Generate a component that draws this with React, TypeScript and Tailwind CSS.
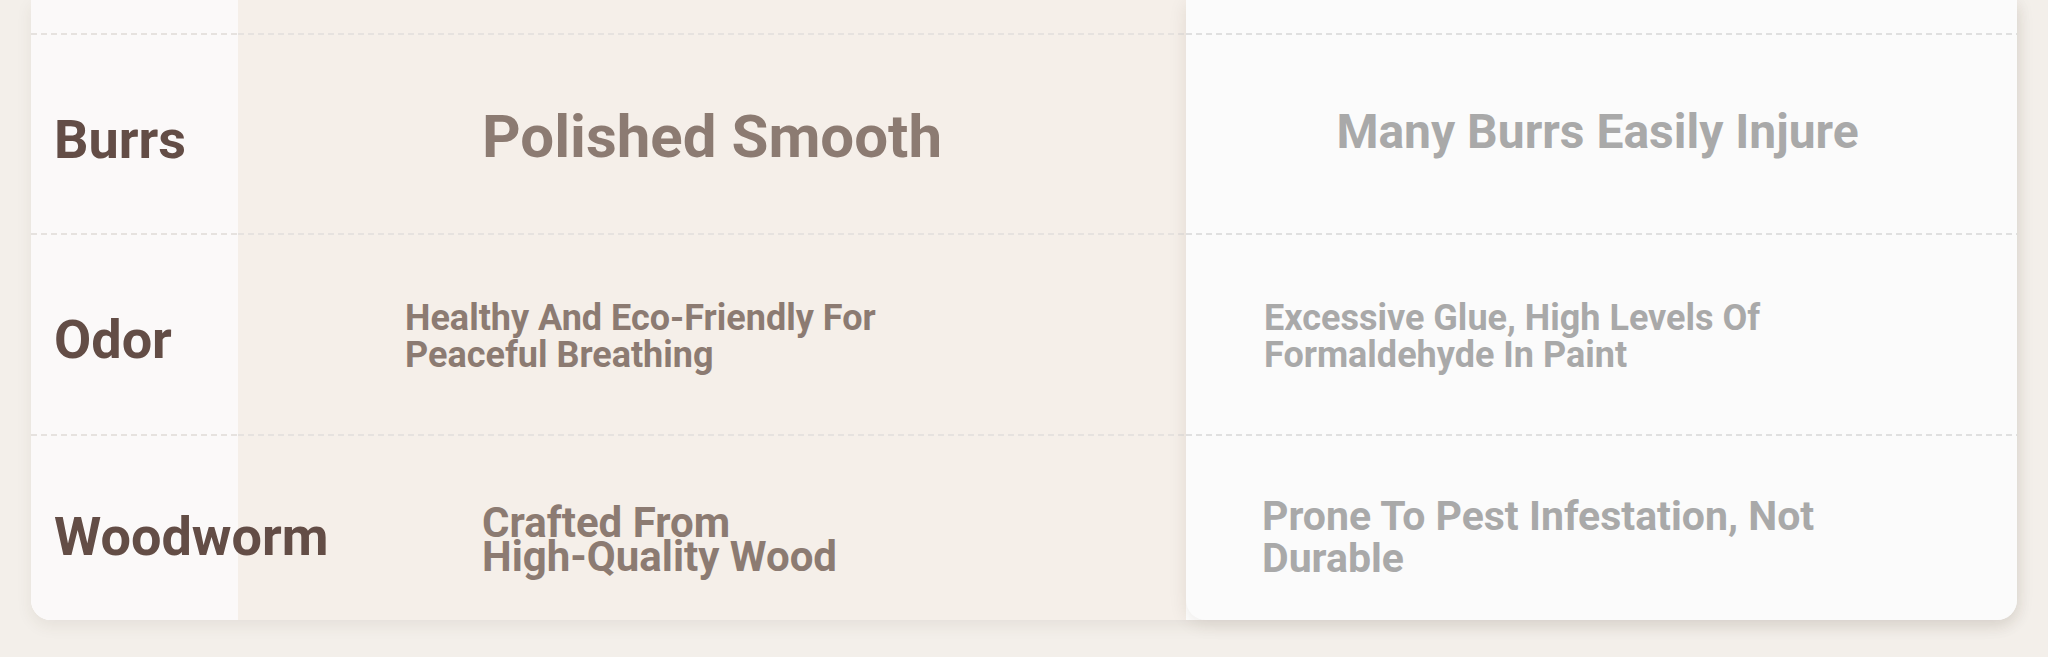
const rows = [
  {
    label: "Burrs",
    labelPad: "pt-[78px]",
    height: "h-[198px]",
    ours: (
      <p className="pt-[72px] text-center text-[60px] leading-none">
        Polished Smooth
      </p>
    ),
    theirs: (
      <p className="pt-[73px] pr-[8px] text-center text-[48px] leading-none">
        Many Burrs Easily Injure
      </p>
    ),
  },
  {
    label: "Odor",
    labelPad: "pt-[78px]",
    height: "h-[199px]",
    ours: (
      <p className="pt-[65px] pl-[167px] text-[36px] leading-[37px]">
        Healthy And Eco-Friendly For
        <br />
        Peaceful Breathing
      </p>
    ),
    theirs: (
      <p className="pt-[65px] pl-[78px] text-[36px] leading-[37px]">
        Excessive Glue, High Levels Of
        <br />
        Formaldehyde In Paint
      </p>
    ),
  },
  {
    label: "Woodworm",
    labelPad: "pt-[74px]",
    height: "h-[184px]",
    ours: (
      <p className="pt-[70px] pl-[244px] text-[42px] leading-[34px]">
        Crafted From
        <br />
        High-Quality Wood
      </p>
    ),
    theirs: (
      <p className="pt-[59px] pl-[76px] text-[41px] leading-[42px]">
        Prone To Pest Infestation, Not
        <br />
        Durable
      </p>
    ),
  },
];

function Dashes({ dark }: { dark?: boolean }) {
  return (
    <div
      className={
        dark
          ? "h-[2px] bg-[repeating-linear-gradient(90deg,#e0e0e0_0_6px,transparent_6px_10px)]"
          : "h-[2px] bg-[repeating-linear-gradient(90deg,#e6e2df_0_6px,transparent_6px_10px)]"
      }
    />
  );
}

export default function App() {
  return (
    <div className="h-[657px] w-[2048px] overflow-hidden bg-[#f3efea] px-[31px] font-['Roboto',sans-serif] font-bold">
      <div className="flex h-[620px] rounded-b-[20px] bg-white shadow-[0_6px_16px_rgba(80,60,40,0.08)]">
        {/* Labels */}
        <div className="w-[207px] flex-none rounded-bl-[20px] bg-[#fbf9f9] text-[#634d46]">
          <div className="h-[33px]" />
          {rows.map((row) => (
            <div key={row.label}>
              <Dashes />
              <div className={`${row.height} pl-[23px] ${row.labelPad}`}>
                <span className="relative z-10 text-[54px] leading-none whitespace-nowrap">
                  {row.label}
                </span>
              </div>
            </div>
          ))}
        </div>

        {/* Our product */}
        <div className="w-[948px] flex-none bg-[#f5efe9] text-[#8c7b72]">
          <div className="h-[33px]" />
          {rows.map((row) => (
            <div key={row.label}>
              <Dashes />
              <div className={`${row.height} whitespace-nowrap`}>
                {row.ours}
              </div>
            </div>
          ))}
        </div>

        {/* Other products */}
        <div className="flex-1 rounded-b-[20px] bg-[#fbfbfb] text-[#a9a9a9] shadow-[0_4px_18px_rgba(60,40,20,0.10)]">
          <div className="h-[33px]" />
          {rows.map((row) => (
            <div key={row.label}>
              <Dashes dark />
              <div className={`${row.height} whitespace-nowrap`}>
                {row.theirs}
              </div>
            </div>
          ))}
        </div>
      </div>
    </div>
  );
}
